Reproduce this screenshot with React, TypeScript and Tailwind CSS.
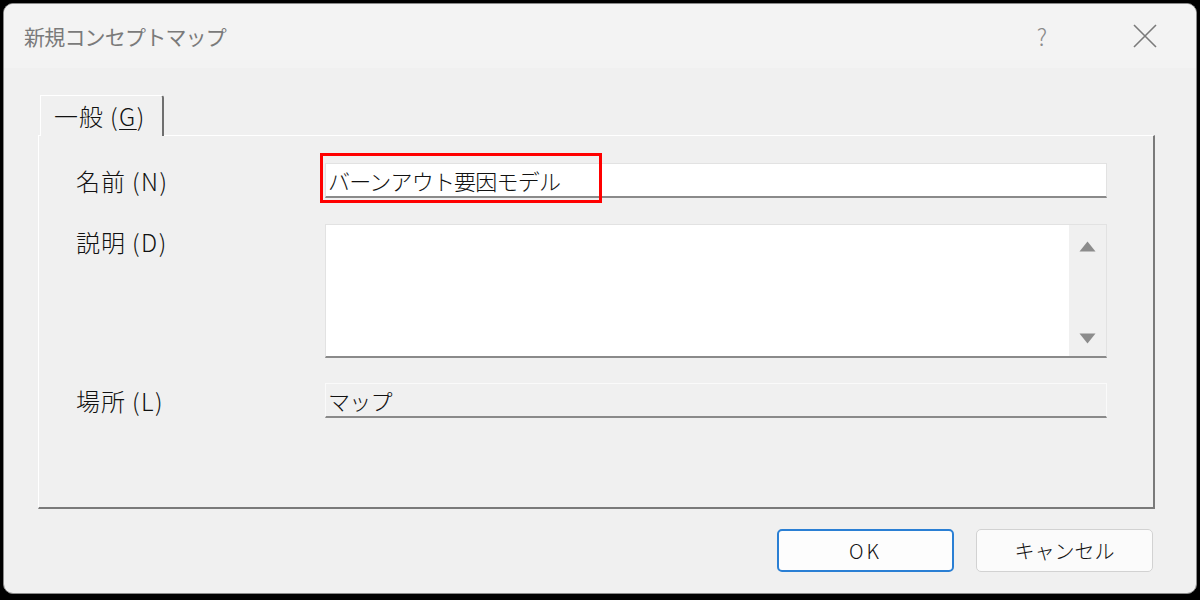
import React from "react";

const font = { fontFamily: '"Noto Sans CJK JP", "Noto Sans", sans-serif' };

function Label({ main, key2 }: { main: string; key2: string }) {
  return (
    <div className="h-[35px] flex items-center text-[24px] text-[#111] leading-none font-light">
      <span className="tracking-[1px]">{main}</span>
      <span className="ml-[6px] tracking-[1.5px]">({key2})</span>
    </div>
  );
}

export default function App() {
  return (
    <div className="w-[1200px] h-[600px] bg-black pt-[3px] px-[3px] pb-[6px]" style={font}>
      <div className="w-full h-full rounded-[10px] border border-[#8a8a8a] bg-[#f0f0f0] flex flex-col overflow-hidden">
        {/* Title bar */}
        <div className="h-[64px] bg-[#f3f3f3] flex items-center pl-[20px] pr-[39px] shrink-0">
          <div className="text-[21px] text-[#7a7a7a] tracking-[-0.8px] leading-none">新規コンセプトマップ</div>
          <div className="flex-1" />
          <div className="text-[23px] text-[#8a8a8a] leading-none mr-[86px] font-light">?</div>
          <svg width="24" height="24" viewBox="0 0 24 24" className="text-[#7a7a7a]">
            <path d="M1 1 L23 23 M23 1 L1 23" stroke="currentColor" strokeWidth="1.6" fill="none" />
          </svg>
        </div>

        {/* Body */}
        <div className="flex-1 flex flex-col pt-[27px] pl-[34px] pr-[41px]">
          {/* Tab strip */}
          <div className="flex h-[40px] relative z-10">
            <div className="ml-[2px] w-[124px] h-[41px] bg-[#f0f0f0] border-t border-l border-white border-r-2 border-r-[#6f6f6f] rounded-tr-[3px] flex items-center pl-[13px]">
              <span className="text-[24px] text-[#111] leading-none font-light">
                <span className="tracking-[1px]">一般</span>
                <span className="ml-[6px] tracking-[1.5px]">
                  (<span className="underline underline-offset-[3px] decoration-1">G</span>)
                </span>
              </span>
            </div>
          </div>

          {/* Panel */}
          <div className="h-[374px] border-t border-l border-white border-r-2 border-b-2 border-r-[#7a7a7a] border-b-[#7a7a7a] pl-[37px] pr-[46px] pt-[27px]">
            <div className="grid grid-cols-[249px_1fr] gap-y-[26px]">
              {/* Name */}
              <Label main="名前" key2="N" />
              <div className="relative h-[35px] bg-white border border-[#e2e2e2] border-b-2 border-b-[#8a8a8a] flex items-center pl-[2px]">
                <span className="text-[22px] text-[#111] leading-none tracking-[-0.8px] font-light">バーンアウト要因モデル</span>
                <div className="absolute left-[-6px] top-[-11px] w-[282px] h-[50px] border-[3px] border-[#ff0000]" />
              </div>

              {/* Description */}
              <Label main="説明" key2="D" />
              <div className="h-[134px] bg-white border border-[#e2e2e2] border-b-2 border-b-[#8a8a8a] flex">
                <div className="flex-1" />
                <div className="w-[37px] bg-[#f0f0f0] flex flex-col items-center justify-between pt-[16px] pb-[12px]">
                  <svg width="17" height="11" viewBox="0 0 17 11">
                    <path d="M8.5 0.5 L16.5 10.5 L0.5 10.5 Z" fill="#8c8c8c" />
                  </svg>
                  <svg width="17" height="11" viewBox="0 0 17 11">
                    <path d="M0.5 0.5 L16.5 0.5 L8.5 10.5 Z" fill="#8c8c8c" />
                  </svg>
                </div>
              </div>

              {/* Location */}
              <div className="mt-[-1px]">
                <Label main="場所" key2="L" />
              </div>
              <div className="h-[35px] bg-[#f0f0f0] border border-[#fafafa] border-b-2 border-b-[#8a8a8a] flex items-center pl-[2px] mt-[-1px]">
                <span className="text-[22px] text-[#111] leading-none tracking-[-0.8px] font-light">マップ</span>
              </div>
            </div>
          </div>

          {/* Buttons */}
          <div className="flex justify-end gap-[22px] mt-[20px] pr-[2px]">
            <button className="w-[177px] h-[43px] rounded-[5px] border-2 border-[#2a7fd4] bg-[#fdfdfd] text-[20px] text-[#111] leading-none flex items-center justify-center font-light tracking-[3px]">
              OK
            </button>
            <button className="w-[177px] h-[43px] rounded-[5px] border border-[#d2d2d2] bg-[#fbfbfb] text-[20px] text-[#111] leading-none flex items-center justify-center font-light">
              キャンセル
            </button>
          </div>
        </div>
      </div>
    </div>
  );
}
